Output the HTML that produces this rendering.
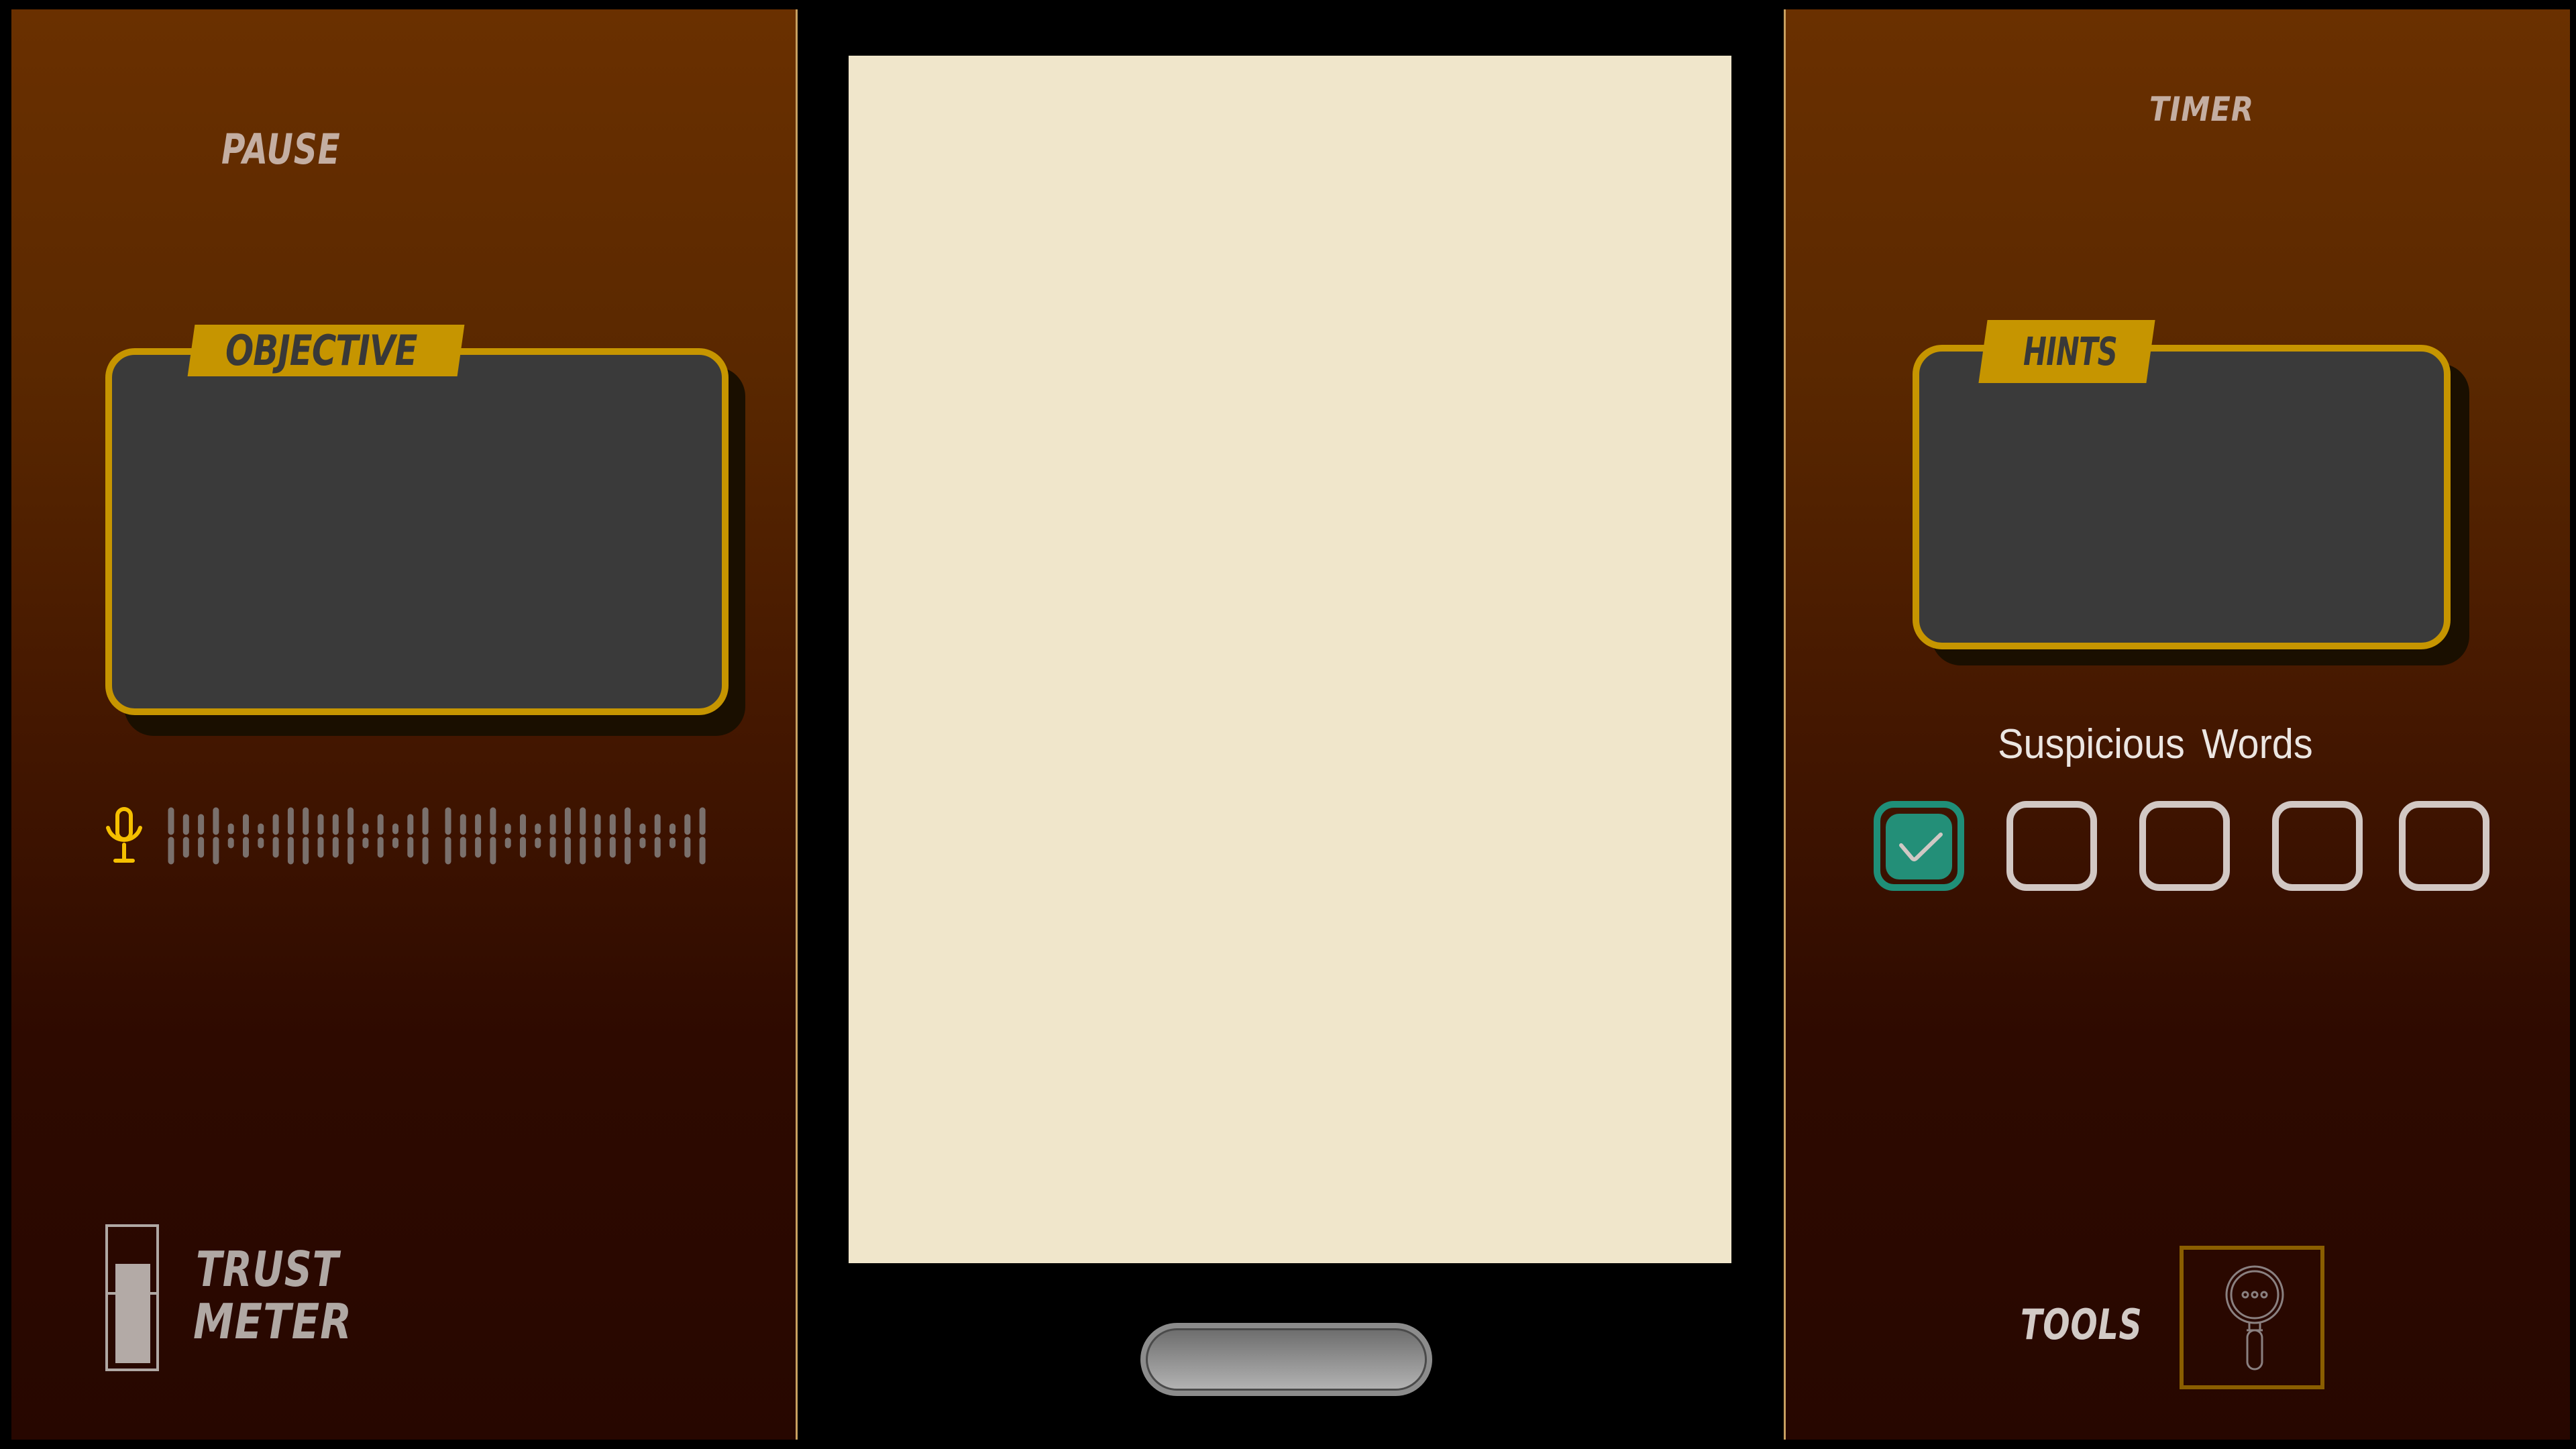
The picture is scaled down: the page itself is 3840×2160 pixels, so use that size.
<!DOCTYPE html>
<html><head><meta charset="utf-8"><style>
*{margin:0;padding:0;box-sizing:border-box}
body{width:3840px;height:2160px;background:#000;position:relative;overflow:hidden;font-family:"DejaVu Sans","Liberation Sans",sans-serif}
.panel{position:absolute;top:14px;height:2132px;background:linear-gradient(#6a3000 0%,#5a2800 25%,#441700 50%,#2e0a00 72%,#270700 100%)}
.lbl{position:absolute;font-weight:bold;font-style:italic;font-stretch:condensed;color:#c4aea2;white-space:nowrap;letter-spacing:1px;transform-origin:0 0}
.box{position:absolute;background:#3a3a3a;border:10px solid #c69500;border-radius:44px}
.shadow{position:absolute;background:#1a0f00;border-radius:44px}
.tab{position:absolute;background:#c69500;transform:skewX(-8deg)}
.tabt{position:absolute;font-weight:bold;font-style:italic;font-stretch:condensed;color:#383838;white-space:nowrap;letter-spacing:-1px;transform-origin:0 0}
.cb{position:absolute;top:1194px;width:135px;height:134px;border:10px solid #d2c8c4;border-radius:30px}
</style></head><body>
<div class="panel" style="left:17px;width:1172px;border-right:3px solid #c8a060"></div>
<div class="panel" style="left:2659px;width:1172px;border-left:3px solid #c8a060"></div>
<div style="position:absolute;left:1265px;top:83px;width:1316px;height:1800px;background:#f0e6cb"></div>
<div style="position:absolute;left:1700px;top:1972px;width:435px;height:109px;border-radius:55px;background:#8c8c8c;padding:8px">
<div style="width:100%;height:100%;border-radius:47px;border:3px solid #4a4a4a;background:linear-gradient(#6e6e6e,#b2b2b2)"></div></div>

<div class="lbl" style="left:330px;top:186px;font-size:62px;transform:scaleX(.87)">PAUSE</div>
<div class="shadow" style="left:185px;top:547px;width:926px;height:550px"></div>
<div class="box" style="left:157px;top:519px;width:929px;height:547px"></div>
<div class="tab" style="left:285px;top:484px;width:402px;height:77px"></div>
<div class="tabt" style="left:336px;top:486px;font-size:62px;transform:scaleX(.89)">OBJECTIVE</div>

<svg style="position:absolute;left:0;top:0" width="1200" height="2160">
<g fill="none" stroke="#f5c000" stroke-width="6" stroke-linecap="round">
<rect x="175" y="1206" width="20" height="45" rx="10"/>
<path d="M161 1234a25 25 0 0 0 48 0M185 1259V1283M172 1283H198"/>
</g>
<g stroke="#7a706c" stroke-width="9" stroke-linecap="round" fill="none">
<path d="M255 1208V1240M255 1252V1284M321.9 1208V1240M321.9 1252V1284M433.4 1208V1240M433.4 1252V1284M455.7 1208V1240M455.7 1252V1284M522.6 1208V1240M522.6 1252V1284M634.1 1208V1240M634.1 1252V1284M668 1208V1240M668 1252V1284M734.9 1208V1240M734.9 1252V1284M846.4 1208V1240M846.4 1252V1284M868.7 1208V1240M868.7 1252V1284M935.6 1208V1240M935.6 1252V1284M1047.1 1208V1240M1047.1 1252V1284"/>
<path d="M277.3 1218V1240M277.3 1252V1274M299.6 1218V1240M299.6 1252V1274M366.5 1218V1240M366.5 1252V1274M411.1 1218V1240M411.1 1252V1274M478 1218V1240M478 1252V1274M500.3 1218V1240M500.3 1252V1274M567.2 1218V1240M567.2 1252V1274M611.8 1218V1240M611.8 1252V1274M690.3 1218V1240M690.3 1252V1274M712.6 1218V1240M712.6 1252V1274M779.5 1218V1240M779.5 1252V1274M824.1 1218V1240M824.1 1252V1274M891 1218V1240M891 1252V1274M913.3 1218V1240M913.3 1252V1274M980.2 1218V1240M980.2 1252V1274M1024.8 1218V1240M1024.8 1252V1274"/>
<path d="M344.2 1232V1239M344.2 1253V1260M388.8 1232V1239M388.8 1253V1260M544.9 1232V1239M544.9 1253V1260M589.5 1232V1239M589.5 1253V1260M757.2 1232V1239M757.2 1253V1260M801.8 1232V1239M801.8 1253V1260M957.9 1232V1239M957.9 1253V1260M1002.5 1232V1239M1002.5 1253V1260"/>
</g>
<rect x="159" y="1827" width="76" height="215" fill="none" stroke="#b0a8a4" stroke-width="4"/>
<rect x="172" y="1884" width="52" height="148" fill="#b3aaa6"/>
<path d="M159 1928H172M224 1928H235" stroke="#b0a8a4" stroke-width="4"/>
</svg>
<div class="lbl" style="left:292px;top:1850px;font-size:72px;color:#b0a8a4;transform:scaleX(.88)">TRUST</div>
<div class="lbl" style="left:288px;top:1928px;font-size:72px;color:#b0a8a4;transform:scaleX(.94)">METER</div>

<div class="lbl" style="left:3204px;top:134px;font-size:50px;transform:scaleX(.96)">TIMER</div>
<div class="shadow" style="left:2879px;top:542px;width:802px;height:450px"></div>
<div class="box" style="left:2851px;top:514px;width:802px;height:454px"></div>
<div class="tab" style="left:2956px;top:477px;width:250px;height:94px"></div>
<div class="tabt" style="left:3016px;top:490px;font-size:58px;transform:scaleX(.8)">HINTS</div>

<div style="position:absolute;left:2978px;top:1074px;font-size:62px;color:#ece6e2;font-family:'Liberation Sans',sans-serif;word-spacing:10px;transform:scaleX(.93);transform-origin:0 0;white-space:nowrap">Suspicious Words</div>
<div class="cb" style="left:2793px;border-color:#1f8f78">
<div style="position:absolute;left:8px;top:9px;width:99px;height:98px;border-radius:20px;background:#238f78"></div></div>
<svg style="position:absolute;left:0;top:0" width="3840" height="2160" fill="none">
<path d="M2834 1260L2850 1279Q2853 1283 2857 1279L2893 1244" stroke="#d0c8c4" stroke-width="6" stroke-linecap="round"/>
<rect x="3252" y="1860" width="210" height="208" stroke="#8a5e00" stroke-width="6"/>
<g stroke="#8a8080" stroke-width="3">
<circle cx="3361" cy="1930" r="42"/><circle cx="3361" cy="1930" r="35"/>
<circle cx="3347" cy="1930" r="4"/><circle cx="3361" cy="1930" r="4"/><circle cx="3375" cy="1930" r="4"/>
<path d="M3353 1972V1983H3369V1972M3349 1983H3373"/>
<rect x="3350" y="1983" width="22" height="58" rx="11"/>
</g>
</svg>
<div class="cb" style="left:2991px"></div>
<div class="cb" style="left:3189px"></div>
<div class="cb" style="left:3387px"></div>
<div class="cb" style="left:3576px"></div>
<div class="lbl" style="left:3012px;top:1938px;font-size:62px;color:#d2cac6;transform:scaleX(.85)">TOOLS</div>
</body></html>
